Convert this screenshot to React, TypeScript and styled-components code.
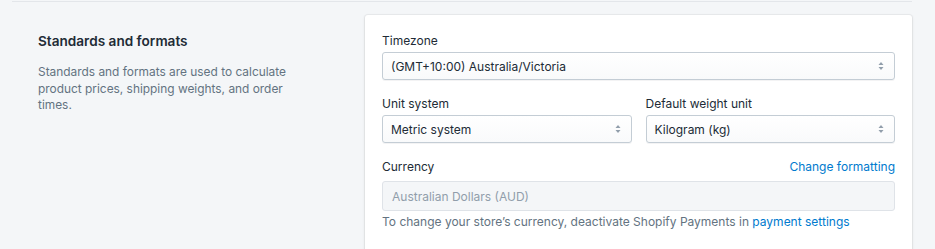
import * as React from 'react'
import styled, { createGlobalStyle } from 'styled-components'

const GlobalStyle = createGlobalStyle`
    html, body {
        margin: 0;
        padding: 0;
        background: #f4f6f8;
        font-family: Inter, "Noto Sans", sans-serif;
        -webkit-font-smoothing: antialiased;
    }
`

const Page = styled.div`
    width: 935px;
    height: 249px;
    overflow: hidden;
    padding: 0 23px 0 12px;
    box-sizing: border-box;
`

const Section = styled.section`
    display: flex;
    align-items: flex-start;
    border-top: 1px solid #e3e6ea;
    margin-top: 1px;
    padding-top: 13px;
`

const Annotation = styled.div`
    width: 353px;
    padding: 17px 0 0 26px;
    box-sizing: border-box;
`

const Title = styled.h2`
    margin: 0;
    font-size: 13.6px;
    font-weight: 600;
    line-height: 18px;
    color: #212b36;
`

const Description = styled.p`
    margin: 14px 0 0;
    width: 265px;
    font-size: 11.9px;
    line-height: 16.5px;
    color: #637381;
`

const Card = styled.div`
    flex: 1;
    background: #ffffff;
    border-radius: 3px;
    box-shadow: 0 0 0 1px rgba(63, 63, 68, 0.05), 0 1px 3px 0 rgba(63, 63, 68, 0.15);
    padding: 16px 17px 30px;
    display: flex;
    flex-direction: column;
    gap: 14px;
    min-height: 240px;
    box-sizing: border-box;
`

const Row = styled.div`
    display: flex;
    gap: 14px;
`

const Field = styled.div`
    flex: 1;
    display: flex;
    flex-direction: column;
`

const LabelRow = styled.div`
    display: flex;
    justify-content: space-between;
    align-items: center;
    height: 18px;
    margin-bottom: 3px;
`

const Label = styled.label`
    font-size: 12px;
    color: #212b36;
`

const Link = styled.a`
    font-size: 12px;
    color: #007ace;
    text-decoration: none;
`

const SelectBox = styled.div`
    position: relative;
    height: 28px;
    display: flex;
    align-items: center;
    padding: 0 24px 0 8px;
    border: 1px solid #c4cdd5;
    border-radius: 3px;
    background: linear-gradient(to bottom, #ffffff, #f9fafb);
    box-shadow: 0 1px 0 0 rgba(22, 29, 37, 0.05);
    font-size: 12px;
    color: #212b36;
    box-sizing: border-box;
`

const Arrows = styled.svg`
    position: absolute;
    right: 10px;
    top: 50%;
    transform: translateY(-50%);
`

const DisabledInput = styled.div`
    height: 30px;
    margin-top: 3px;
    display: flex;
    align-items: center;
    padding: 0 9px;
    border: 1px solid #dfe3e8;
    border-radius: 3px;
    background: #f4f6f8;
    font-size: 12px;
    color: #919eab;
    box-sizing: border-box;
`

const Help = styled.p`
    margin: 3px 0 0;
    font-size: 12px;
    color: #637381;
`

function Select({ value }: { value: string }) {
    return (
        <SelectBox>
            {value}
            <Arrows width="6" height="10" viewBox="0 0 6 10">
                <path d="M3 1 L5.5 4 H0.5 Z" fill="#919eab" />
                <path d="M3 9 L5.5 6 H0.5 Z" fill="#919eab" />
            </Arrows>
        </SelectBox>
    )
}

export default function App() {
    return (
        <Page>
            <GlobalStyle />
            <Section>
                <Annotation>
                    <Title>Standards and formats</Title>
                    <Description>
                        Standards and formats are used to calculate product prices, shipping weights, and order times.
                    </Description>
                </Annotation>
                <Card>
                    <Field>
                        <LabelRow><Label>Timezone</Label></LabelRow>
                        <Select value="(GMT+10:00) Australia/Victoria" />
                    </Field>
                    <Row>
                        <Field>
                            <LabelRow><Label>Unit system</Label></LabelRow>
                            <Select value="Metric system" />
                        </Field>
                        <Field>
                            <LabelRow><Label>Default weight unit</Label></LabelRow>
                            <Select value="Kilogram (kg)" />
                        </Field>
                    </Row>
                    <Field>
                        <LabelRow>
                            <Label>Currency</Label>
                            <Link href="#">Change formatting</Link>
                        </LabelRow>
                        <DisabledInput>Australian Dollars (AUD)</DisabledInput>
                        <Help>
                            To change your store’s currency, deactivate Shopify Payments in <Link href="#">payment settings</Link>
                        </Help>
                    </Field>
                </Card>
            </Section>
        </Page>
    )
}
